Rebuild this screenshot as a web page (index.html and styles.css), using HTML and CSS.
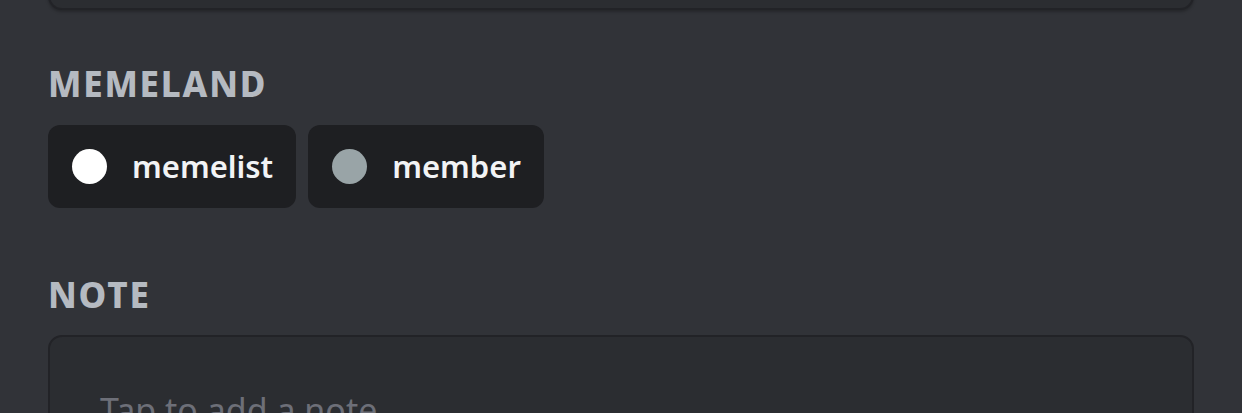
FILE: index.html
```html
<!DOCTYPE html>
<html>
<head>
<meta charset="utf-8">
<link rel="stylesheet" href="styles.css">
</head>
<body>
<div class="page">
  <div class="top-box"></div>
  <section class="section roles-section">
    <h2 class="heading">MEMELAND</h2>
    <div class="roles">
      <div class="role"><span class="dot dot-white"></span><span class="role-name">memelist</span></div>
      <div class="role"><span class="dot dot-grey"></span><span class="role-name">member</span></div>
    </div>
  </section>
  <section class="section note-section">
    <h2 class="heading">NOTE</h2>
    <div class="note-box"><span class="placeholder">Tap to add a note</span></div>
  </section>
</div>
</body>
</html>
```

FILE: styles.css
```css
* { box-sizing: border-box; margin: 0; padding: 0; }
html, body { background: #313338; }
body {
  width: 1242px;
  height: 413px;
  overflow: hidden;
  font-family: "Noto Sans", "Open Sans", sans-serif;
}
.page {
  padding: 0 48px;
  display: flex;
  flex-direction: column;
}
.top-box {
  height: 60px;
  margin-top: -50px;
  background: #2b2d31;
  border: 2px solid #222327;
  border-radius: 14px;
  box-shadow: 0 2px 3px rgba(0,0,0,0.25);
}
.heading {
  font-size: 35px;
  font-weight: 800;
  color: #b5bac1;
  letter-spacing: 1.8px;
  line-height: 40px;
}
.roles-section { margin-top: 54px; }
.roles {
  display: flex;
  gap: 12px;
  margin-top: 21px;
}
.role {
  height: 83px;
  background: #1e1f22;
  border-radius: 12px;
  display: flex;
  align-items: center;
  padding: 0 23px 0 24px;
}
.dot {
  width: 35px;
  height: 35px;
  border-radius: 50%;
  margin-right: 25px;
}
.dot-white { background: #ffffff; }
.dot-grey { background: #99a4a7; }
.role-name {
  font-size: 31px;
  font-weight: 600;
  color: #f2f3f5;
  line-height: 40px;
  padding-bottom: 2px;
}
.note-section { margin-top: 67px; }
.note-box {
  margin-top: 20px;
  height: 120px;
  background: #2b2d31;
  border: 2px solid #222327;
  border-radius: 14px;
  padding: 50px 0 0 50px;
}
.placeholder {
  font-size: 34px;
  color: #6d6f78;
}
```
